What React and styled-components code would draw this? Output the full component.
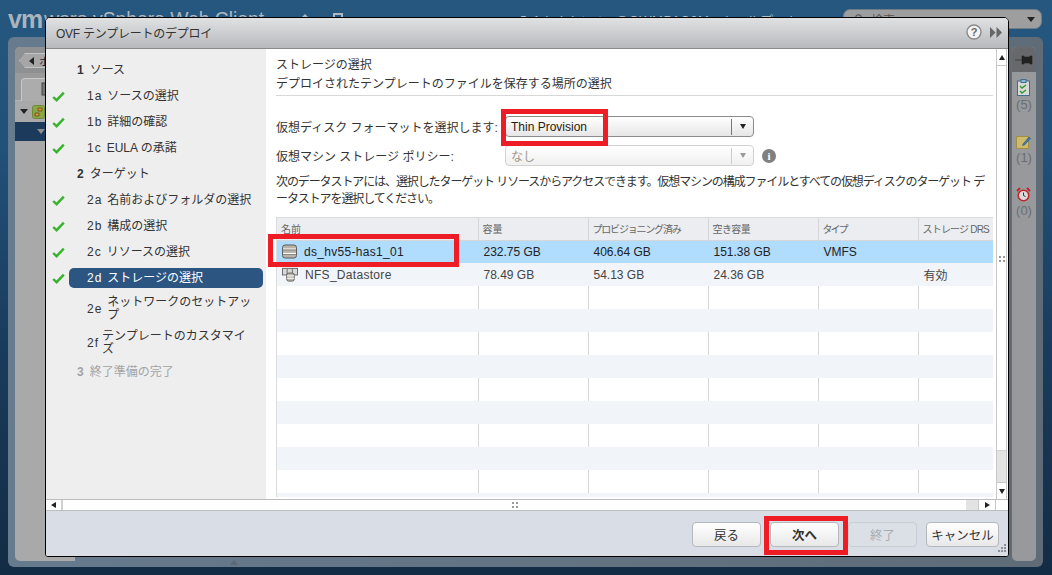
import React from "react";
import styled, { createGlobalStyle } from "styled-components";

const Global = createGlobalStyle`
  html, body { margin: 0; padding: 0; height: 100%; overflow: hidden; }
  body { font-family: "Liberation Sans", "Noto Sans CJK JP", sans-serif; font-size: 12px; color: #333; }
  * { box-sizing: border-box; }
`;

const Page = styled.div`
  position: relative; width: 1052px; height: 575px; overflow: hidden;
  display: flex; flex-direction: column;
  background: linear-gradient(180deg, #25577f 0%, #22517a 25%, #1a3c5c 60%, #132c45 100%);
`;
const Header = styled.header`
  height: 37px; flex: none; display: flex; align-items: flex-start; padding: 9px 10px 0 8px;
  color: #a9b4bd; white-space: nowrap; overflow: hidden;
`;
const LogoVm = styled.span`
  font-size: 25px; line-height: 22px; font-weight: 700; letter-spacing: -1px; width: 36px; flex: none; margin-top: -1px;
`;
const LogoWare = styled.span`
  font-size: 21px; line-height: 22px; width: 49px; flex: none; margin-top: -1px; letter-spacing: -.5px;
`;
const AppName = styled.span`
  font-size: 19.3px; line-height: 22px; width: 197px; flex: none; color: #aeb8c0;
`;
const HeadIcon = styled.svg`
  flex: none; margin: 3px 0 0 ${p => p.$gap}px; width: 16px; height: 16px;
`;
const UserText = styled.span`
  flex: none; margin: 3px 0 0 ${p => p.$gap}px; font-size: 13px; line-height: 18px; color: #b8c2ca; letter-spacing: .5px;
`;
const Search = styled.div`
  margin-left: auto; width: 199px; height: 20px; flex: none; background: #9e9e9e; border: 1px solid #6d7c89;
  border-radius: 7px; display: flex; align-items: center; padding: 0 6px 0 10px; gap: 8px; color: #555;
`;
const SearchCaret = styled.i`
  margin-left: auto; width: 0; height: 0; border: 4px solid transparent; border-top: 5px solid #222; border-bottom: 0;
`;
const Workspace = styled.main`
  position: relative; margin: 0 9px 8px 8px; flex: 1; min-height: 0; display: flex; justify-content: space-between;
  border-radius: 6px; padding: 10px 7px 6px 7px;
  background: linear-gradient(90deg, #667b8e, #5f6c78);
`;
const Notch = styled.i`
  position: absolute; left: 222px; bottom: 2px; width: 0; height: 0;
  border: 4px solid transparent; border-bottom: 5px solid #5d6873; border-top: 0;
`;
const LeftPane = styled.section`
  width: 60px; display: flex; flex-direction: column; background: #a9a9a9; border-radius: 5px 0 0 5px; overflow: hidden;
`;
const BackRow = styled.div`
  height: 26px; flex: none; background: #8e9092; padding: 6px 0 0 4px;
`;
const BackButton = styled.div`
  display: flex; align-items: center; gap: 5px; height: 15px; padding-left: 9px; background: #a6a6a6;
  border: 1px solid #c4c4c4; border-right: 0; font-size: 11px; color: #222;
  clip-path: polygon(6px 0, 100% 0, 100% 100%, 6px 100%, 0 50%);
`;
const TabRow = styled.div`
  height: 28px; flex: none; background: #9a9a9a; padding: 5px 0 0 6px; border-bottom: 1px solid #b5b5b5;
`;
const Tab = styled.div`
  height: 23px; background: #acacac; border: 1px solid #c9c9c9; border-bottom: 0; border-radius: 4px 0 0 0; padding: 3px 0 0 19px;
`;
const TreeRow = styled.div`
  height: 21px; flex: none; display: flex; align-items: center; gap: 4px; padding-left: 5px;
`;
const CaretDown = styled.i`
  width: 0; height: 0; border: 4px solid transparent; border-top: 5px solid ${p => p.$c}; border-bottom: 0; flex: none;
`;
const DarkRow = styled.div`
  height: 19px; flex: none; background: #1c3a5c; display: flex; align-items: center; padding-left: 22px;
`;
const RightRail = styled.aside`
  width: 24px; background: #97999c; border-radius: 5px; display: flex; flex-direction: column; align-items: center; overflow: hidden;
`;
const PinHead = styled.div`
  height: 25px; width: 100%; background: #66686b; flex: none; display: flex; align-items: center; justify-content: center;
`;
const RailItem = styled.div`
  display: flex; flex-direction: column; align-items: center; height: ${p => p.$h}px; padding-top: ${p => p.$pt}px; gap: 1px;
  color: #6b6e71; font-size: 13px; line-height: 15px;
`;

const Modal = styled.div`
  position: absolute; left: 45px; top: 17px; width: 964px; height: 540px; background: #fff;
  border: 1.5px solid #000; border-radius: 5px 5px 3px 3px; display: flex; flex-direction: column; overflow: hidden;
`;
const TitleBar = styled.div`
  height: 31px; flex: none; display: flex; align-items: center; padding: 0 6px 2px 10px; gap: 8px;
  background: linear-gradient(180deg, #e0e1e3, #b8b9bc); border-bottom: 1px solid #8a8a8a; color: #333;
`;
const Title = styled.h1`
  margin: 0; font-size: 12px; font-weight: 400; flex: 1; letter-spacing: -.25px;
`;
const Body = styled.div`
  height: 450px; flex: none; display: flex;
`;
const Sidebar = styled.nav`
  width: 220px; flex: none; background: #eee; padding-top: 8px;
`;
const Step = styled.div`
  height: ${p => p.$h || 26}px; display: flex; align-items: center; line-height: 13px;
  color: ${p => p.$muted ? "#a3a3a3" : "#333"};
`;
const CheckSlot = styled.div`
  width: 23px; flex: none; padding-left: 6px; display: flex; align-items: center;
`;
const StepBody = styled.div`
  flex: none; width: 194px; display: flex; align-items: center; gap: ${p => p.$gap}px;
  padding-left: ${p => p.$top ? 8 : 18}px; height: ${p => p.$selected ? "20px" : "auto"};
  background: ${p => p.$selected ? "#2c5582" : "transparent"}; color: ${p => p.$selected ? "#fff" : "inherit"};
  border-radius: 5px;
`;
const Num = styled.span`
  font-weight: ${p => p.$top ? 700 : 400}; letter-spacing: ${p => p.$top ? 0 : 1}px; flex: none;
`;
const StepLabel = styled.span`
  max-width: 148px; word-break: break-all;
`;
const Main = styled.div`
  flex: 1; min-width: 0; padding: 7px 3px 0 10px; position: relative;
`;
const Heading = styled.div`
  line-height: 19px; white-space: nowrap;
`;
const Rule = styled.hr`
  border: 0; height: 1px; background: #d8d8d8; margin: 1px 0 0;
`;
const FormRow = styled.div`
  display: flex; align-items: center; height: 21px; margin-top: ${p => p.$mt}px;
`;
const FieldLabel = styled.label`
  width: 229px; flex: none; white-space: nowrap; color: #333;
`;
const Select = styled.div`
  position: relative; width: 249px; height: 21px; flex: none; display: flex; align-items: center; padding-left: 5px;
  border: 1px solid ${p => p.$off ? "#d2d2d2" : "#8b8b8b"}; border-radius: 4px;
  background: linear-gradient(180deg, #fff, ${p => p.$off ? "#f0f0f0" : "#e6e6e6"});
  color: ${p => p.$off ? "#a0988e" : "#2b1a0a"};
`;
const SelectArrow = styled.div`
  margin-left: auto; width: 22px; height: 16px; border-left: 1px solid ${p => p.$off ? "#ccc" : "#777"};
  display: flex; align-items: center; justify-content: center;
`;
const Triangle = styled.i`
  width: 0; height: 0; border: 3.5px solid transparent; border-top: 5px solid ${p => p.$c}; border-bottom: 0;
`;
const InfoDot = styled.span`
  width: 14px; height: 14px; margin-left: 8px; background: #808080; border-radius: 50%; color: #fff; font-weight: 700;
  font-size: 11px; line-height: 14px; text-align: center; font-family: "Liberation Serif", serif;
`;
const Para = styled.p`
  margin: 8px 0 0; line-height: 17px; letter-spacing: -1.1px; white-space: nowrap; color: #333;
`;
const TableArea = styled.div`
  position: relative; margin-top: 9px;
`;
const TableClip = styled.div`
  height: 280px; overflow: hidden; border: 1px solid #dcdcdc; border-bottom: 0; border-right: 0;
`;
const Table = styled.table`
  width: 716px; table-layout: fixed; border-collapse: collapse;
`;
const Th = styled.th`
  height: 22px; padding: 0 0 0 4px; text-align: left; font-size: 10px; font-weight: 400; color: #666; white-space: nowrap;
  background: #ebedf0; border: 1px solid #d4d6d9; border-top: 0; border-left: 0;
  letter-spacing: ${p => p.$ls || 0}px; width: ${p => p.$w}px;
`;
const Tr = styled.tr`
  height: 23px; background: ${p => p.$sel ? "#b0dcfe" : p.$alt ? "#f1f5fa" : "#fff"};
`;
const Td = styled.td`
  padding: 0 0 0 5px; color: ${p => p.$sel ? "#222" : "#444"}; white-space: nowrap;
  border-right: 1px solid ${p => p.$line ? "#d6d6d6" : "transparent"};
`;
const NameCell = styled.div`
  display: flex; align-items: center; gap: 7px; letter-spacing: .3px;
`;
const Highlight = styled.div`
  position: absolute; left: ${p => p.$l}px; top: ${p => p.$t}px; width: ${p => p.$w}px; height: ${p => p.$h}px;
  border: 5px solid #ee1c25; pointer-events: none; z-index: 2;
`;
const VScroll = styled.div`
  width: 11px; flex: none; margin-right: 1px; display: flex; flex-direction: column; border-left: 1px solid #c8c8c8; border-right: 1px solid #c8c8c8;
`;
const ScrollBtn = styled.div`
  height: 17px; flex: none; display: flex; align-items: center; justify-content: center; background: #fff;
  border-${p => p.$side}: 1px solid #c8c8c8;
`;
const VTrack = styled.div`
  position: relative; flex: 1; display: flex; flex-direction: column; justify-content: flex-end;
`;
const VThumb = styled.div`
  height: 32px; background: #e3e3e3; border-top: 1px solid #d2d2d2;
`;
const Dots = styled.svg`
  width: 6px; height: 6px; flex: none;
`;
const VDots = styled(Dots)`
  position: absolute; left: 2px; top: 190px;
`;
const Arrow = styled.i`
  width: 0; height: 0; border: ${p => p.$s || 3}px solid transparent;
  ${p => p.$dir === "up" && "border-bottom: 5px solid #222; border-top: 0;"}
  ${p => p.$dir === "down" && "border-top: 5px solid #222; border-bottom: 0;"}
  ${p => p.$dir === "left" && "border-right: 5px solid #222; border-left: 0;"}
  ${p => p.$dir === "right" && "border-left: 5px solid #222; border-right: 0;"}
`;
const HScroll = styled.div`
  height: 12px; flex: none; display: flex; border-top: 1px solid #bdbdbd; border-bottom: 1px solid #bdbdbd; background: #fff;
`;
const HBtnLeft = styled.div`
  width: 17px; flex: none; display: flex; align-items: center; justify-content: center; border-right: 2px solid #d0d0d0;
`;
const HTrack = styled.div`
  flex: 1; display: flex; align-items: center; justify-content: center;
`;
const HThumb = styled.div`
  width: 12px; flex: none; background: #e3e3e3;
`;
const HBtnRight = styled.div`
  width: 18px; flex: none; display: flex; align-items: center; justify-content: center; border-left: 1px solid #c8c8c8; border-right: 1px solid #c8c8c8;
`;
const HCorner = styled.div`
  width: 12px; flex: none;
`;
const Footer = styled.footer`
  position: relative; flex: 1; background: #d9dee6; display: flex; justify-content: flex-end; gap: 9px; padding: 11px 9px 0 0;
`;
const ButtonWrap = styled.div`
  position: relative; width: ${p => p.$w}px; height: 25px;
`;
const Button = styled.button`
  width: 100%; height: 100%; padding: 0; font: inherit; font-size: 12.5px; font-weight: ${p => p.$strong ? 700 : 400};
  color: ${p => p.$off ? "#a8adb3" : "#333"}; border-radius: 4px; border: 1px solid ${p => p.$off ? "#c8cdd3" : "#b5b8bc"};
  background: ${p => p.$off ? "#dbe0e7" : "linear-gradient(180deg, #fff, #e8e8e8)"};
`;
const Grip = styled.svg`
  position: absolute; right: 2px; bottom: 2px; width: 10px; height: 10px;
`;

const Check = () => (
  <svg width="13" height="11" viewBox="0 0 13 11">
    <path d="M1.2 6 L4.6 9.2 L11.8 1.6" fill="none" stroke="#37b32c" strokeWidth="2.4" />
  </svg>
);
const DotGrid = ({ as: C = Dots }) => (
  <C viewBox="0 0 6 6"><path d="M0 0h2v2H0zM4 0h2v2H4zM0 4h2v2H0zM4 4h2v2H4z" fill="#9a9a9a" /></C>
);
const DbIcon = () => (
  <svg width="15" height="15" viewBox="0 0 15 15">
    <rect x=".5" y="1" width="14" height="13" rx="2.5" fill="#b9b4a8" stroke="#5d5d5d" />
    <path d="M1 5h13M1 9.5h13" stroke="#fff" strokeWidth="1.2" />
    <path d="M1 6h13M1 10.5h13" stroke="#777" strokeWidth=".8" />
  </svg>
);
const NfsIcon = () => (
  <svg width="16" height="15" viewBox="0 0 17 15">
    <rect x=".5" y="1" width="16" height="7" fill="#d8d8d8" stroke="#666" />
    <path d="M5.5 1v7M11 1v7" stroke="#666" />
    <rect x="5" y="6" width="8" height="8.5" rx="2" fill="#bcb7ab" stroke="#5a5a5a" />
    <path d="M5 9h8M5 11.5h8" stroke="#fff" />
  </svg>
);

const steps = [
  { n: "1", t: "ソース", top: true, g: 6 },
  { n: "1a", t: "ソースの選択", ok: true },
  { n: "1b", t: "詳細の確認", ok: true },
  { n: "1c", t: "EULA の承諾", ok: true },
  { n: "2", t: "ターゲット", top: true, g: 6 },
  { n: "2a", t: "名前およびフォルダの選択", ok: true },
  { n: "2b", t: "構成の選択", ok: true },
  { n: "2c", t: "リソースの選択", ok: true },
  { n: "2d", t: "ストレージの選択", ok: true, sel: true },
  { n: "2e", t: "ネットワークのセットアップ", h: 36 },
  { n: "2f", t: "テンプレートのカスタマイズ", h: 32, g: 3 },
  { n: "3", t: "終了準備の完了", top: true, muted: true, g: 6 },
];

const rows = [
  { name: "ds_hv55-has1_01", icon: <DbIcon />, cap: "232.75 GB", prov: "406.64 GB", free: "151.38 GB", type: "VMFS", drs: "", sel: true },
  { name: "NFS_Datastore", icon: <NfsIcon />, cap: "78.49 GB", prov: "54.13 GB", free: "24.36 GB", type: "", drs: "有効" },
  ...Array.from({ length: 10 }, () => ({ name: "", cap: "", prov: "", free: "", type: "", drs: "" })),
];

export default function App() {
  return (
    <Page>
      <Global />
      <Header>
        <LogoVm>vm</LogoVm>
        <LogoWare>ware</LogoWare>
        <AppName>vSphere Web Client</AppName>
        <HeadIcon $gap={7} viewBox="0 0 16 16"><path d="M8 2 L15 9 H1 Z" fill="#aeb8c0" /></HeadIcon>
        <HeadIcon $gap={16} viewBox="0 0 16 16"><path d="M5 2h8v8H5z M2 6h8v8H2z" fill="none" stroke="#aeb8c0" strokeWidth="2" /></HeadIcon>
        <UserText $gap={170}>↗ Administrator@GWMP1C0M</UserText>
        <UserText $gap={16}>| ヘルプ ▾ |</UserText>
        <Search><span>⚲</span><span>検索</span><SearchCaret /></Search>
      </Header>
      <Workspace>
        <LeftPane>
          <BackRow><BackButton><Arrow $dir="left" $s={4} />ホーム</BackButton></BackRow>
          <TabRow><Tab><svg width="10" height="14" viewBox="0 0 10 14"><rect x="1" y="1" width="8" height="12" fill="#777" stroke="#444" /></svg></Tab></TabRow>
          <TreeRow>
            <CaretDown $c="#222" />
            <svg width="13" height="14" viewBox="0 0 13 14">
              <rect x=".5" y=".5" width="12" height="13" rx="2" fill="#8aa648" stroke="#6d8a35" />
              <path d="M3 8h4v3H3zM6 3h4v3H6z" fill="#c99a3d" stroke="#7a5a18" />
            </svg>
          </TreeRow>
          <DarkRow><CaretDown $c="#8e8e8e" /></DarkRow>
        </LeftPane>
        <RightRail>
          <PinHead>
            <svg width="18" height="10" viewBox="0 0 18 10"><path d="M0 5h7M7 1h2v1h6V1h2v8h-2V8H9v1H7z" fill="#222" stroke="#222" strokeWidth=".6" /></svg>
          </PinHead>
          <RailItem $h={52} $pt={7}>
            <svg width="13" height="17" viewBox="0 0 13 17">
              <rect x=".5" y="2" width="12" height="14.5" fill="#d9d9d9" stroke="#3f6f8f" />
              <rect x="4" y=".5" width="5" height="3" fill="#8fb7cf" stroke="#3f6f8f" />
              <path d="M3 7l2 2 4-3M3 12l2 2 4-3" fill="none" stroke="#2f9a2a" strokeWidth="1.4" />
            </svg>
            <span>(5)</span>
          </RailItem>
          <RailItem $h={54} $pt={11}>
            <svg width="15" height="14" viewBox="0 0 15 14">
              <rect x=".5" y="1.5" width="12" height="12" fill="#cdbb6b" stroke="#a08f45" />
              <path d="M7 9 L13 2 L14.5 3.5 L8.5 10 L6.5 10.5 Z" fill="#3a78b5" stroke="#234f7d" strokeWidth=".5" />
            </svg>
            <span>(1)</span>
          </RailItem>
          <RailItem $h={50} $pt={9}>
            <svg width="15" height="15" viewBox="0 0 15 15">
              <circle cx="7.5" cy="8.5" r="5.3" fill="#d9d9d9" stroke="#c0262a" strokeWidth="1.6" />
              <path d="M1 4l3-3M14 4l-3-3" stroke="#c0262a" strokeWidth="2" />
              <path d="M7.5 5.5v3l2 1" fill="none" stroke="#333" />
            </svg>
            <span>(0)</span>
          </RailItem>
        </RightRail>
        <Notch />
      </Workspace>

      <Modal>
        <TitleBar>
          <Title>OVF テンプレートのデプロイ</Title>
          <svg width="16" height="16" viewBox="0 0 16 16">
            <circle cx="8" cy="8" r="7" fill="#f4f4f4" stroke="#8a8a8a" strokeWidth="1.4" />
            <text x="8" y="12" textAnchor="middle" fontSize="11" fontWeight="700" fill="#666" fontFamily="Liberation Sans">?</text>
          </svg>
          <svg width="12" height="11" viewBox="0 0 12 11"><path d="M0 0l5.5 5.5L0 11zM6.5 0L12 5.5 6.5 11z" fill="#666" /></svg>
        </TitleBar>
        <Body>
          <Sidebar>
            {steps.map(s => (
              <Step key={s.n} $h={s.h} $muted={s.muted}>
                <CheckSlot>{s.ok && <Check />}</CheckSlot>
                <StepBody $top={s.top} $selected={s.sel} $gap={s.g ?? 5}>
                  <Num $top={s.top}>{s.n}</Num>
                  <StepLabel>{s.t}</StepLabel>
                </StepBody>
              </Step>
            ))}
          </Sidebar>
          <Main>
            <Heading>ストレージの選択</Heading>
            <Heading>デプロイされたテンプレートのファイルを保存する場所の選択</Heading>
            <Rule />
            <FormRow $mt={20}>
              <FieldLabel>仮想ディスク フォーマットを選択します:</FieldLabel>
              <Select>
                Thin Provision
                <SelectArrow><Triangle $c="#222" /></SelectArrow>
                <Highlight $l={-5} $t={-8} $w={107} $h={37} />
              </Select>
            </FormRow>
            <FormRow $mt={8}>
              <FieldLabel>仮想マシン ストレージ ポリシー:</FieldLabel>
              <Select $off>
                なし
                <SelectArrow $off><Triangle $c="#999" /></SelectArrow>
              </Select>
              <InfoDot>i</InfoDot>
            </FormRow>
            <Para>
              次のデータストアには、選択したターゲット リソースからアクセスできます。仮想マシンの構成ファイルとすべての仮想ディスクのターゲット デ<br />
              ータストアを選択してください。
            </Para>
            <TableArea>
              <TableClip>
                <Table>
                  <thead>
                    <tr>
                      <Th $w={201}>名前</Th>
                      <Th $w={110}>容量</Th>
                      <Th $w={120} $ls={-1.2}>プロビジョニング済み</Th>
                      <Th $w={110} $ls={-.6}>空き容量</Th>
                      <Th $w={100} $ls={-2}>タイプ</Th>
                      <Th $w={75} $ls={-.8}>ストレージ DRS</Th>
                    </tr>
                  </thead>
                  <tbody>
                    {rows.map((r, i) => {
                      const line = i > 1 && i % 2 === 0;
                      return (
                        <Tr key={i} $sel={r.sel} $alt={i % 2 === 1}>
                          <Td $line={line} $sel={r.sel}><NameCell>{r.icon}{r.name}</NameCell></Td>
                          <Td $line={line} $sel={r.sel}>{r.cap}</Td>
                          <Td $line={line} $sel={r.sel}>{r.prov}</Td>
                          <Td $line={line} $sel={r.sel}>{r.free}</Td>
                          <Td $line={line} $sel={r.sel}>{r.type}</Td>
                          <Td $sel={r.sel}>{r.drs}</Td>
                        </Tr>
                      );
                    })}
                  </tbody>
                </Table>
              </TableClip>
              <Highlight $l={-8} $t={17} $w={191} $h={33} />
            </TableArea>
          </Main>
          <VScroll>
            <ScrollBtn $side="bottom"><Arrow $dir="up" /></ScrollBtn>
            <VTrack>
              <DotGrid as={VDots} />
              <VThumb />
            </VTrack>
            <ScrollBtn $side="top"><Arrow $dir="down" /></ScrollBtn>
          </VScroll>
        </Body>
        <HScroll>
          <HBtnLeft><Arrow $dir="left" /></HBtnLeft>
          <HTrack><DotGrid /></HTrack>
          <HThumb />
          <HBtnRight><Arrow $dir="right" /></HBtnRight>
          <HCorner />
        </HScroll>
        <Footer>
          <ButtonWrap $w={69}><Button>戻る</Button></ButtonWrap>
          <ButtonWrap $w={69}>
            <Button $strong>次へ</Button>
            <Highlight $l={-6} $t={-6} $w={84} $h={39} />
          </ButtonWrap>
          <ButtonWrap $w={69}><Button $off disabled>終了</Button></ButtonWrap>
          <ButtonWrap $w={73}><Button>キャンセル</Button></ButtonWrap>
          <Grip viewBox="0 0 10 10"><path d="M8 0h2v2H8zM5 3h2v2H5zM8 3h2v2H8zM2 6h2v2H2zM5 6h2v2H5zM8 6h2v2H8z" fill="#8a8f96" /></Grip>
        </Footer>
      </Modal>
    </Page>
  );
}
